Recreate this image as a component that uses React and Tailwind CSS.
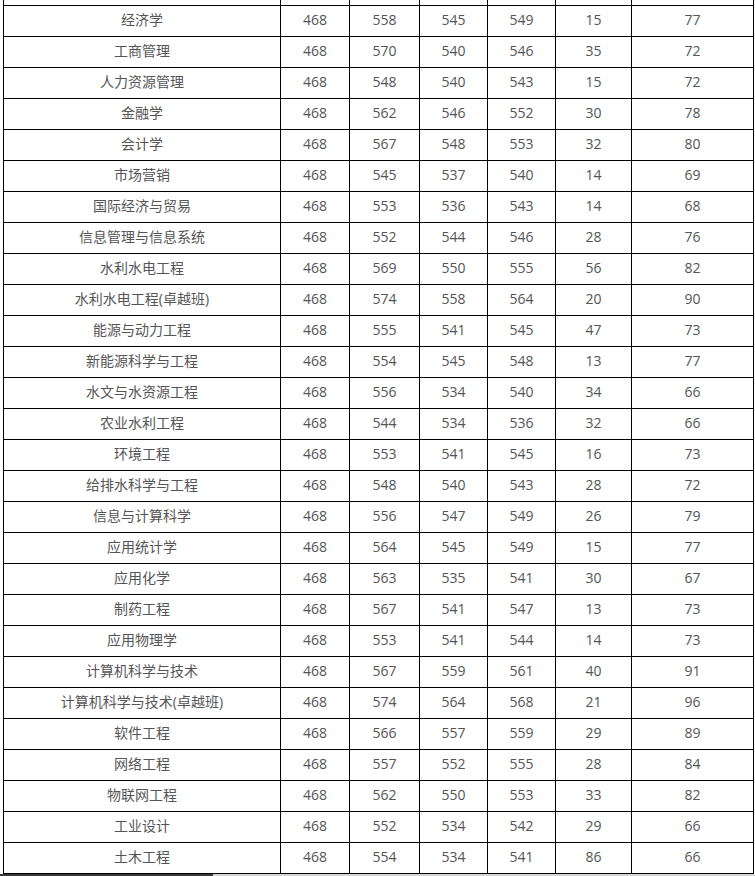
import React from "react";

const rows = [
  ["经济学", 468, 558, 545, 549, 15, 77],
  ["工商管理", 468, 570, 540, 546, 35, 72],
  ["人力资源管理", 468, 548, 540, 543, 15, 72],
  ["金融学", 468, 562, 546, 552, 30, 78],
  ["会计学", 468, 567, 548, 553, 32, 80],
  ["市场营销", 468, 545, 537, 540, 14, 69],
  ["国际经济与贸易", 468, 553, 536, 543, 14, 68],
  ["信息管理与信息系统", 468, 552, 544, 546, 28, 76],
  ["水利水电工程", 468, 569, 550, 555, 56, 82],
  ["水利水电工程(卓越班)", 468, 574, 558, 564, 20, 90],
  ["能源与动力工程", 468, 555, 541, 545, 47, 73],
  ["新能源科学与工程", 468, 554, 545, 548, 13, 77],
  ["水文与水资源工程", 468, 556, 534, 540, 34, 66],
  ["农业水利工程", 468, 544, 534, 536, 32, 66],
  ["环境工程", 468, 553, 541, 545, 16, 73],
  ["给排水科学与工程", 468, 548, 540, 543, 28, 72],
  ["信息与计算科学", 468, 556, 547, 549, 26, 79],
  ["应用统计学", 468, 564, 545, 549, 15, 77],
  ["应用化学", 468, 563, 535, 541, 30, 67],
  ["制药工程", 468, 567, 541, 547, 13, 73],
  ["应用物理学", 468, 553, 541, 544, 14, 73],
  ["计算机科学与技术", 468, 567, 559, 561, 40, 91],
  ["计算机科学与技术(卓越班)", 468, 574, 564, 568, 21, 96],
  ["软件工程", 468, 566, 557, 559, 29, 89],
  ["网络工程", 468, 557, 552, 555, 28, 84],
  ["物联网工程", 468, 562, 550, 553, 33, 82],
  ["工业设计", 468, 552, 534, 542, 29, 66],
  ["土木工程", 468, 554, 534, 541, 86, 66],
];

const widths = [277, 69, 70, 68, 68, 76, 122];

const Row = ({ cells }) => (
  <tr>
    {cells.map((c, i) => (
      <td
        key={i}
        className="border border-black h-[31px] p-0 pb-[2px] text-center align-middle whitespace-nowrap"
      >
        {c}
      </td>
    ))}
  </tr>
);

export default function App() {
  return (
    <div className="relative h-[876px] w-[755px] overflow-hidden bg-white">
      <div className="pl-[3px]">
        <table
          className="table-fixed border-collapse w-[751px] -mt-[26px] text-[14px] leading-[20px] text-[#555]"
          style={{ fontFamily: '"Open Sans", "Noto Sans CJK SC", sans-serif' }}
        >
          <colgroup>
            {widths.map((w, i) => (
              <col key={i} style={{ width: w }} />
            ))}
          </colgroup>
          <tbody>
            <Row cells={["", "", "", "", "", "", ""]} />
            {rows.map((r) => (
              <Row key={r[0]} cells={r} />
            ))}
            <Row cells={["", "", "", "", "", "", ""]} />
          </tbody>
        </table>
      </div>
      {/* horizontal scrollbar at the bottom edge */}
      <div className="absolute bottom-0 left-0 right-0 h-[2px] flex bg-[#d4d4d4]">
        <div className="w-[213px] bg-[#3a3a3a]" />
      </div>
    </div>
  );
}
